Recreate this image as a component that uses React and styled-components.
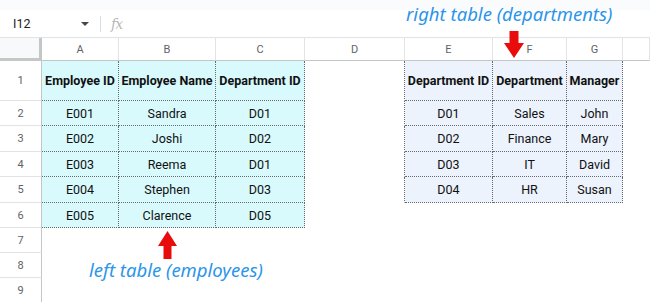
import React from "react";
import styled, { createGlobalStyle } from "styled-components";

const GlobalStyle = createGlobalStyle`
  html, body {
    margin: 0;
    padding: 0;
    background: #ffffff;
  }
  body {
    font-family: Roboto, "Liberation Sans", sans-serif;
    width: 650px;
    height: 302px;
    overflow: hidden;
  }
`;

const COLS = ["A", "B", "C", "D", "E", "F", "G", ""];
const WIDTHS = "42px 77px 97px 89px 100px 88px 74px 56px 1fr";
const ROW_HEIGHTS = [40, 25, 26, 25, 26, 25, 25, 25, 25];

const employees = [
  ["Employee ID", "Employee Name", "Department ID"],
  ["E001", "Sandra", "D01"],
  ["E002", "Joshi", "D02"],
  ["E003", "Reema", "D01"],
  ["E004", "Stephen", "D03"],
  ["E005", "Clarence", "D05"],
];

const departments = [
  ["Department ID", "Department", "Manager"],
  ["D01", "Sales", "John"],
  ["D02", "Finance", "Mary"],
  ["D03", "IT", "David"],
  ["D04", "HR", "Susan"],
];

const Screen = styled.div`
  position: relative;
  width: 650px;
  height: 302px;
  overflow: hidden;
`;

const TopStrip = styled.div`
  height: 10px;
  background: #f9fbfd;
`;

const FormulaBar = styled.div`
  display: flex;
  align-items: center;
  height: 27px;
  background: #ffffff;
  border-bottom: 1px solid #e1e3e6;
`;

const NameBox = styled.div`
  display: flex;
  align-items: center;
  justify-content: space-between;
  width: 76px;
  padding: 0 11px 0 13px;
  font-size: 12.5px;
  color: #202124;
`;

const Caret = styled.span`
  width: 0;
  height: 0;
  border-left: 4px solid transparent;
  border-right: 4px solid transparent;
  border-top: 4px solid #444746;
`;

const Divider = styled.div`
  width: 1px;
  height: 16px;
  background: #dadce0;
  margin-right: 10px;
`;

const Fx = styled.span`
  font-family: "DejaVu Serif", "Liberation Serif", serif;
  font-style: italic;
  font-size: 14px;
  color: #b8b8b8;
  letter-spacing: -1px;
`;

const Sheet = styled.div`
  display: grid;
  grid-template-columns: ${WIDTHS};
  grid-template-rows: 23px ${ROW_HEIGHTS.map((h) => h + "px").join(" ")};
`;

const Corner = styled.div`
  background: #f8f9fa;
  border-right: 3px solid #c4c7c5;
  border-bottom: 3px solid #c4c7c5;
`;

const ColHead = styled.div`
  display: flex;
  align-items: center;
  justify-content: center;
  font-size: 11px;
  color: #5f6368;
  background: #ffffff;
  border-right: 1px solid #e1e3e6;
  border-bottom: 1px solid #c4c7c5;
`;

const RowHead = styled.div`
  display: flex;
  align-items: center;
  justify-content: center;
  font-size: 11px;
  color: #5f6368;
  background: #ffffff;
  border-right: 1px solid #c4c7c5;
  border-bottom: 1px solid #e1e3e6;
`;

const Cell = styled.div`
  display: flex;
  align-items: center;
  justify-content: center;
  font-size: 12.5px;
  font-weight: ${(p) => (p.$bold ? 700 : 400)};
  color: #111111;
  white-space: nowrap;
  background: ${(p) => p.$fill || "transparent"};
  border-right: 1px ${(p) => (p.$edgeR ? "dotted #6a6a6a" : "solid transparent")};
  border-bottom: 1px ${(p) => (p.$edgeB ? "dotted #6a6a6a" : "solid transparent")};
`;

const Note = styled.div`
  position: absolute;
  left: ${(p) => p.$x}px;
  top: ${(p) => p.$y}px;
  font-family: "Noto Sans", "DejaVu Sans", sans-serif;
  font-style: italic;
  font-size: 18.5px;
  color: #2b95e9;
  white-space: nowrap;
`;

const Arrow = styled.svg`
  position: absolute;
  left: ${(p) => p.$x}px;
  top: ${(p) => p.$y}px;
`;

const cellFor = (row, col) => {
  // row: 0-based data row (0 = sheet row 1), col: 0-based column index
  if (col <= 2 && row < employees.length) {
    return { text: employees[row][col], fill: "#d9fafd", edgeR: true, edgeB: true };
  }
  if (col >= 4 && col <= 6 && row < departments.length) {
    return { text: departments[row][col - 4], fill: "#ecf3fd", edgeR: true, edgeB: true };
  }
  if (col === 3 && row < departments.length) {
    return { text: "", edgeR: true };
  }
  return { text: "" };
};

const App = () => {
  return (
    <Screen>
      <GlobalStyle />
      <TopStrip />
      <FormulaBar>
        <NameBox>
          <span>I12</span>
          <Caret />
        </NameBox>
        <Divider />
        <Fx>fx</Fx>
      </FormulaBar>
      <Sheet>
        <Corner />
        {COLS.map((c, i) => (
          <ColHead key={"h" + i}>{c}</ColHead>
        ))}
        {ROW_HEIGHTS.map((_, r) => (
          <React.Fragment key={"r" + r}>
            <RowHead>{r + 1}</RowHead>
            {COLS.map((_, c) => {
              const cell = cellFor(r, c);
              return (
                <Cell
                  key={c}
                  $bold={r === 0}
                  $fill={cell.fill}
                  $edgeR={cell.edgeR}
                  $edgeB={cell.edgeB}
                >
                  {cell.text}
                </Cell>
              );
            })}
          </React.Fragment>
        ))}
      </Sheet>

      <Note $x={406} $y={1}>right table (departments)</Note>
      <Arrow $x={503} $y={31} width="22" height="28" viewBox="0 0 22 28">
        <path d="M6.5 0 H15.5 V12 H21 L11 27 L1 12 H6.5 Z" fill="#e80c0c" />
      </Arrow>

      <Arrow $x={157} $y={231} width="21" height="29" viewBox="0 0 21 29">
        <path d="M10.5 0 L20 15 H14.5 V28 H6.5 V15 H1 Z" fill="#e80c0c" />
      </Arrow>
      <Note $x={89} $y={257}>left table (employees)</Note>
    </Screen>
  );
};

export default App;
